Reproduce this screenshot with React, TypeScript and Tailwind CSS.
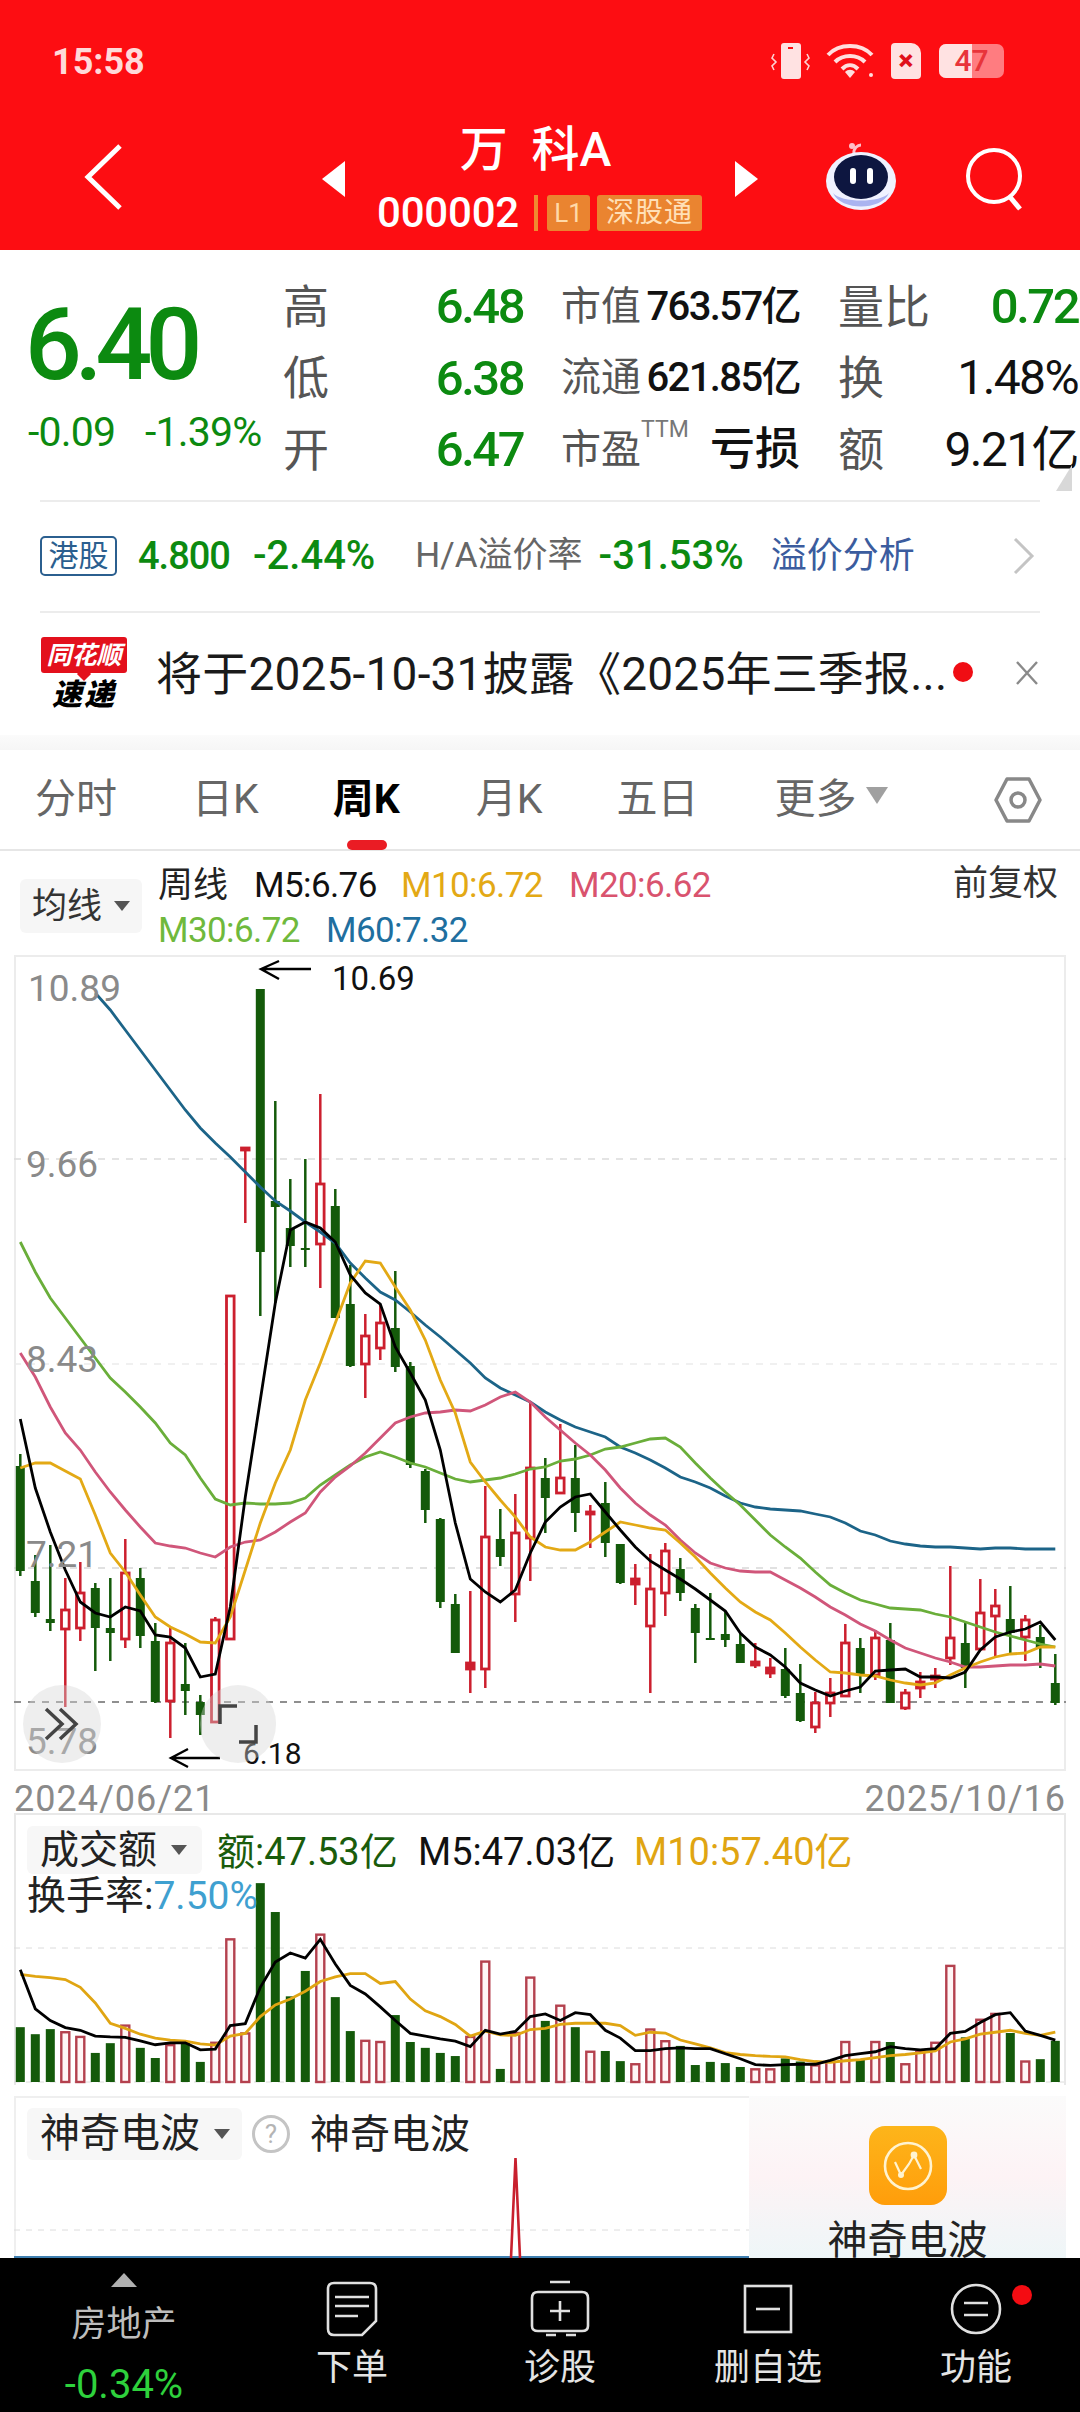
import React from "react";

const G = "#145a0a";
const R = "#cc1f2e";
const X0 = 20.3;
const DX = 15;
const cx = (i: number) => X0 + DX * i;

// [isRed, wickTop, wickBottom, bodyTop, bodyBottom]
const candles: [number, number, number, number, number][] = [
  [0,1454,1576,1466,1571],[0,1555,1617,1581,1613],[0,1545,1631,1619,1623],[1,1578,1707,1610,1629],[1,1562,1641,1593,1628],
  [0,1583,1671,1588,1628],[0,1578,1661,1628,1633],[1,1539,1648,1573,1639],[0,1568,1648,1578,1636],[0,1623,1703,1641,1702],
  [1,1627,1738,1643,1701],[0,1643,1715,1684,1691],[0,1695,1735,1702,1715],[1,1617,1722,1620,1722],[1,1296,1639,1296,1639],
  [1,1147,1223,1148,1150],[0,989,1316,989,1252],[0,1101,1303,1201,1207],[0,1179,1267,1228,1246],[0,1159,1267,1248,1250],
  [1,1094,1288,1184,1244],[0,1189,1318,1206,1318],[0,1265,1367,1304,1366],[1,1314,1398,1336,1364],[1,1305,1360,1323,1348],
  [0,1271,1372,1328,1367],[0,1362,1468,1366,1465],[0,1469,1523,1471,1510],[0,1518,1608,1519,1602],[0,1594,1653,1604,1653],
  [1,1591,1693,1663,1669],[1,1486,1688,1537,1669],[0,1509,1566,1539,1557],[1,1494,1622,1533,1594],[1,1403,1581,1468,1538],
  [0,1458,1533,1478,1498],[1,1424,1493,1478,1493],[0,1445,1532,1478,1513],[1,1505,1548,1512,1513],[0,1482,1557,1503,1543],
  [0,1544,1584,1544,1583],[1,1564,1605,1579,1584],[1,1554,1693,1589,1626],[1,1543,1616,1551,1593],[0,1558,1601,1569,1593],
  [0,1604,1663,1608,1633],[0,1593,1639,1638,1639],[0,1612,1647,1634,1640],[0,1633,1663,1644,1663],[1,1643,1668,1662,1665],
  [1,1658,1678,1668,1673],[0,1648,1698,1669,1696],[0,1664,1722,1693,1721],[1,1692,1733,1703,1727],[1,1678,1717,1693,1703],
  [1,1624,1696,1643,1696],[0,1638,1693,1648,1675],[1,1630,1680,1638,1675],[0,1623,1703,1640,1703],[1,1689,1710,1693,1708],
  [1,1672,1698,1682,1688],[1,1668,1688,1676,1679],[1,1566,1665,1638,1658],[0,1623,1688,1643,1668],[1,1579,1649,1613,1649],
  [1,1589,1656,1606,1616],[0,1586,1653,1619,1633],[1,1615,1661,1620,1637],[0,1625,1668,1637,1648],[0,1654,1705,1683,1703],
];

const m5 = [1419,1488,1532,1570,1602,1613,1617,1607,1611,1635,1637,1648,1677,1674,1607,1497,1400,1303,1230,1222,1228,1242,1275,1293,1304,1347,1373,1400,1450,1523,1579,1592,1602,1590,1553,1522,1507,1497,1494,1512,1530,1547,1561,1570,1579,1589,1600,1611,1633,1647,1655,1667,1683,1690,1696,1691,1687,1671,1670,1669,1677,1677,1678,1672,1650,1637,1632,1629,1622,1640];
const m10 = [1468,1463,1463,1471,1479,1515,1553,1572,1595,1617,1627,1634,1642,1643,1617,1570,1523,1483,1450,1400,1363,1323,1283,1261,1263,1287,1310,1340,1380,1413,1462,1482,1500,1517,1537,1547,1550,1550,1542,1532,1522,1525,1528,1530,1543,1557,1573,1588,1602,1612,1620,1633,1647,1660,1672,1673,1675,1676,1680,1683,1685,1683,1675,1668,1662,1657,1654,1653,1647,1647];
const m20 = [1353,1377,1407,1433,1450,1472,1492,1510,1527,1543,1546,1548,1553,1557,1547,1542,1540,1532,1522,1513,1492,1477,1466,1453,1438,1423,1417,1413,1412,1410,1411,1405,1397,1392,1402,1417,1430,1443,1455,1470,1488,1503,1515,1525,1540,1553,1563,1568,1571,1572,1572,1580,1588,1597,1607,1615,1624,1631,1640,1648,1653,1658,1662,1667,1667,1666,1665,1665,1664,1666];
const m30 = [1242,1272,1298,1318,1338,1358,1378,1392,1407,1423,1443,1455,1478,1499,1505,1503,1504,1504,1503,1498,1485,1475,1465,1457,1452,1457,1463,1467,1473,1479,1482,1480,1478,1474,1469,1467,1461,1459,1455,1449,1447,1443,1439,1438,1447,1463,1478,1492,1505,1520,1535,1547,1558,1572,1585,1593,1600,1604,1608,1609,1610,1614,1617,1622,1627,1632,1636,1640,1644,1647];
const m60 = [993,1010,1030,1050,1070,1090,1110,1128,1143,1157,1172,1187,1201,1211,1222,1232,1243,1263,1278,1292,1300,1312,1325,1337,1350,1363,1378,1388,1395,1402,1412,1420,1427,1432,1437,1447,1453,1460,1468,1477,1482,1488,1496,1503,1507,1509,1510,1511,1514,1517,1523,1531,1535,1541,1544,1546,1547,1547,1548,1549,1548,1548,1549,1549,1549];

const volTop = [582,600,587,595,607,648,623,578,635,661,628,622,671,622,357,598,213,287,503,438,345,505,592,617,620,551,620,635,648,656,607,414,689,597,455,566,527,582,645,643,669,677,588,618,630,679,671,674,684,690,690,662,670,680,670,620,665,620,620,677,645,622,425,608,563,548,597,670,664,617];
const volM5 = [435,535,565,583,590,605,607,608,617,627,622,622,640,638,578,573,480,415,392,405,357,420,475,497,530,565,598,605,612,618,632,590,600,593,555,548,565,545,550,590,610,642,642,637,635,637,637,650,663,678,680,678,677,677,667,655,650,645,632,637,640,637,598,593,570,550,545,592,603,615];
const volM10 = [447,452,455,460,480,520,572,585,600,610,615,618,625,628,605,598,555,525,510,490,465,453,445,445,470,465,510,540,555,575,605,592,602,603,588,585,575,572,572,572,578,603,595,597,615,625,635,647,652,655,657,658,665,670,672,668,665,660,655,652,648,643,620,612,600,595,590,598,603,595];
const vy = (z: number) => 1800 + z / 2.562;

const pts = (a: number[], start = 0) => a.map((y, i) => `${cx(i + start)},${y}`).join(" ");

function PriceChart() {
  return (
    <svg width="1052" height="816" viewBox="14 955 1052 816" className="block">
      <path d="M15 1771 V956 H1065 V1771 M14 1770 H1066" fill="none" stroke="#ececec" strokeWidth="2" />
      <line x1="14" x2="1066" y1="1159" y2="1159" stroke="#dcdcdc" strokeWidth="1.5" strokeDasharray="7 7" />
      <line x1="14" x2="1066" y1="1364" y2="1364" stroke="#ececec" strokeWidth="1.5" strokeDasharray="7 7" />
      <line x1="14" x2="1066" y1="1568" y2="1568" stroke="#d8d8d8" strokeWidth="1.5" strokeDasharray="7 7" />
      <line x1="14" x2="1066" y1="1702" y2="1702" stroke="#8f8f8f" strokeWidth="2" strokeDasharray="7 7" />
      {candles.map(([red, wt, wb, bt, bb], i) => {
        const x = cx(i);
        const c = red ? R : G;
        const h = Math.max(bb - bt, 2);
        return (
          <g key={i}>
            <line x1={x} x2={x} y1={wt} y2={bt} stroke={c} strokeWidth="2.5" />
            <line x1={x} x2={x} y1={bb} y2={wb} stroke={c} strokeWidth="2.5" />
            {red ? (
              <rect x={x - 3.8} y={bt} width="7.6" height={h} fill={h < 8 ? c : "#fff"} stroke={c} strokeWidth="2.8" />
            ) : (
              <rect x={x - 4.5} y={bt} width="9" height={h} fill={c} />
            )}
          </g>
        );
      })}
      <polyline points={pts(m60, 5)} fill="none" stroke="#1c6488" strokeWidth="2.8" />
      <polyline points={pts(m30)} fill="none" stroke="#6aae3a" strokeWidth="2.8" />
      <polyline points={pts(m20)} fill="none" stroke="#d0567a" strokeWidth="2.8" />
      <polyline points={pts(m10)} fill="none" stroke="#e3a915" strokeWidth="2.8" />
      <polyline points={pts(m5)} fill="none" stroke="#000" strokeWidth="2.8" />
      <path d="M279 961 L261 969 L279 979 M261 969 H311" fill="none" stroke="#000" strokeWidth="2.4" />
      <path d="M188 1749 L171 1758 L188 1767 M171 1758 H220" fill="none" stroke="#000" strokeWidth="2.4" />
    </svg>
  );
}

function VolumeChart() {
  return (
    <svg width="1052" height="272" viewBox="14 1813 1052 272" className="block">
      <path d="M15 2085 V1814 H1065 V2085" fill="none" stroke="#e8e8e8" strokeWidth="2" />
      <line x1="14" x2="1066" y1="1948" y2="1948" stroke="#dcdcdc" strokeWidth="1" strokeDasharray="6 6" />
      <line x1="14" x2="1066" y1="2082" y2="2082" stroke="#dcdcdc" strokeWidth="1" strokeDasharray="6 6" />
      {volTop.map((z, i) => {
        const red = candles[i][0];
        const y = vy(z);
        const x = cx(i);
        return red ? (
          <rect key={i} x={x - 4} y={y} width="8" height={2082 - y} fill="#fff6f6" stroke="#b4414e" strokeWidth="2.4" />
        ) : (
          <rect key={i} x={x - 4.5} y={y} width="9" height={2082 - y} fill={G} />
        );
      })}
      <polyline points={pts(volM10.map(vy))} fill="none" stroke="#e0a512" strokeWidth="2.8" />
      <polyline points={pts(volM5.map(vy))} fill="none" stroke="#000" strokeWidth="2.8" />
    </svg>
  );
}

function WaveChart() {
  return (
    <svg width="1052" height="162" viewBox="14 2096 1052 162" className="block">
      <path d="M15 2258 V2097 H1065 V2258" fill="none" stroke="#efefef" strokeWidth="2" />
      <line x1="14" x2="1066" y1="2230" y2="2230" stroke="#dcdcdc" strokeWidth="1" strokeDasharray="6 6" />
      <line x1="14" x2="1066" y1="2257" y2="2257" stroke="#3f7fb0" strokeWidth="2" />
      <path d="M511 2258 L515.5 2158 L520 2258" fill="none" stroke="#c8202e" strokeWidth="2.6" />
    </svg>
  );
}

function Caret({ className }: { className: string }) {
  return (
    <svg width="18" height="12" viewBox="0 0 18 12" className={className}>
      <path d="M1 1 H17 L9 11 Z" fill="#555" />
    </svg>
  );
}

function Robot() {
  return (
    <svg width="72" height="68" viewBox="0 0 72 68" className="ml-[67px]">
      <path d="M29 11 C28 5 33 2 36 2" fill="none" stroke="#ffc0c8" strokeWidth="3" />
      <circle cx="27" cy="3" r="3" fill="#ffc0c8" />
      <ellipse cx="36" cy="38" rx="35" ry="29" fill="#f0f2ff" />
      <path d="M8 50 C16 68 56 68 64 50 C56 60 16 60 8 50Z" fill="#aab4f0" />
      <ellipse cx="36" cy="34" rx="27" ry="22" fill="#0d1640" />
      <rect x="25" y="25" width="6" height="16" rx="3" fill="#fff" />
      <rect x="42" y="25" width="6" height="16" rx="3" fill="#fff" />
    </svg>
  );
}

function Row({ label, value, labelCls, valueCls }: { label: React.ReactNode; value: React.ReactNode; labelCls: string; valueCls: string }) {
  return (
    <div className="flex items-center justify-between h-[71.5px] whitespace-nowrap">
      <span className={labelCls}>{label}</span>
      <span className={valueCls}>{value}</span>
    </div>
  );
}

const up = "text-[46px] leading-none text-[#555555]";
const mid = "text-[40px] leading-none text-[#555555]";
const gv = "text-[49px] leading-none font-medium text-[#0c8a10] tracking-[-2.5px]";
const bv = "text-[48px] leading-none text-[#111111] tracking-[-1.6px]";
const mv = "text-[40px] leading-none font-medium text-[#111111] tracking-[-1.6px]";

function BottomItem({ icon, label, dot }: { icon: React.ReactNode; label: string; dot?: boolean }) {
  return (
    <div className="relative w-[208px] flex flex-col items-center">
      <div className="h-[62px] mt-[20px] flex items-center justify-center">{icon}</div>
      <div className="mt-[5px] text-[36px] leading-[46px] text-[#e4e4e4]">{label}</div>
      {dot && <div className="absolute left-[140px] top-[27px] w-[20px] h-[20px] rounded-full bg-[#f40c12]" />}
    </div>
  );
}

export default function App() {
  return (
    <div className="relative w-[1080px] h-[2412px] overflow-hidden bg-white flex flex-col font-['Roboto','Noto_Sans_CJK_SC',sans-serif]">
      {/* header */}
      <div className="h-[250px] shrink-0 bg-[#fd0d12] flex flex-col">
        <div className="h-[125px] flex items-start justify-between pt-[42px] pl-[52px] pr-[76px]">
          <span className="text-[36px] leading-[40px] font-bold text-[#ffd9d9]">15:58</span>
          <div className="flex items-center gap-[14px]">
            <svg width="40" height="38" viewBox="0 0 40 38">
              <rect x="10" y="1" width="20" height="36" rx="3" fill="#ffe2e2" />
              <rect x="17" y="5" width="5" height="2" fill="#fd0d12" />
              <path d="M3 12 L1 16 L5 20 L1 24 L3 28 M36 12 L38 16 L34 20 L38 24 L36 28" fill="none" stroke="#ffd0d0" strokeWidth="1.6" />
            </svg>
            <svg width="52" height="38" viewBox="0 0 52 38">
              <path d="M3 13 C14 1 36 1 47 13 M10 20 C18 12 32 12 40 20 M17 27 C22 22 28 22 33 27" fill="none" stroke="#ffdede" strokeWidth="4" />
              <path d="M20 30 L25 36 L30 30 C27 27 23 27 20 30Z" fill="#ffdede" />
              <circle cx="46" cy="33" r="2" fill="#ffdede" />
            </svg>
            <div className="w-[30px] h-[36px] rounded-[4px] rounded-tr-[10px] bg-[#ffe2e2] flex items-center justify-center text-[28px] leading-none font-black text-[#e0101a]">×</div>
            <div className="relative w-[65px] h-[34px] rounded-[7px] overflow-hidden bg-[#ff7c80] flex items-center justify-center ml-[4px]">
              <div className="absolute left-0 top-0 bottom-0 w-[33px] bg-[#ffe2e2]" />
              <span className="relative text-[30px] leading-none font-medium text-[#e8343a]">47</span>
            </div>
          </div>
        </div>
        <div className="flex items-start h-[125px]">
          <svg width="40" height="66" viewBox="0 0 40 66" className="ml-[84px] mt-[19px]">
            <path d="M36 2 L4 33 L36 64" fill="none" stroke="#fff" strokeWidth="5" />
          </svg>
          <svg width="23" height="36" viewBox="0 0 23 36" className="ml-[198px] mt-[36px]">
            <path d="M23 0 V36 L0 18Z" fill="#fff" />
          </svg>
          <div className="ml-[32px] w-[322px] flex flex-col items-start">
            <div className="self-center ml-[-5px] text-[48px] leading-[50px] font-medium text-white whitespace-nowrap">万&nbsp;&nbsp;科A</div>
            <div className="flex items-center mt-[19px] h-[38px]">
              <span className="text-[42px] leading-none font-medium text-white tracking-[-0.2px]">000002</span>
              <span className="w-[4px] h-[36px] bg-[#f08a30] ml-[15px]" />
              <span className="ml-[9px] w-[43px] h-[36px] bg-[#ea8430] rounded-[3px] flex items-center justify-center text-[26px] leading-none text-[#ffd9a8]">L1</span>
              <span className="ml-[7px] w-[105px] h-[36px] bg-[#ea8430] rounded-[3px] flex items-center justify-center text-[28px] leading-none text-[#ffe0b8] tracking-[1px] whitespace-nowrap">深股通</span>
            </div>
          </div>
          <svg width="23" height="36" viewBox="0 0 23 36" className="ml-[36px] mt-[36px]">
            <path d="M0 0 V36 L23 18Z" fill="#fff" />
          </svg>
          <div className="mt-[18px]"><Robot /></div>
          <svg width="62" height="66" viewBox="0 0 62 66" className="ml-[67px] mt-[22px]">
            <circle cx="30" cy="29" r="26" fill="none" stroke="#fff" strokeWidth="4" />
            <path d="M46 50 L56 62" fill="none" stroke="#fff" strokeWidth="5" />
          </svg>
        </div>
      </div>

      {/* quote */}
      <div className="relative h-[250px] shrink-0 flex pt-[21px]">
        <div className="w-[283px] pl-[25px] shrink-0">
          <div className="mt-[19px] text-[100px] leading-[110px] font-medium text-[#0c8a10] tracking-[-7px]">6.40</div>
          <div className="mt-[9px] flex text-[41px] leading-[46px] text-[#0c8a10] tracking-[-0.8px] whitespace-nowrap pl-[3px]">
            <span className="w-[117px]">-0.09</span>
            <span>-1.39%</span>
          </div>
        </div>
        <div className="w-[240px] shrink-0">
          <Row label="高" value="6.48" labelCls={up} valueCls={gv} />
          <Row label="低" value="6.38" labelCls={up} valueCls={gv} />
          <Row label="开" value="6.47" labelCls={up} valueCls={gv} />
        </div>
        <div className="ml-[38px] w-[239px] shrink-0">
          <Row label="市值" value="763.57亿" labelCls={mid} valueCls={mv} />
          <Row label="流通" value="621.85亿" labelCls={mid} valueCls={mv} />
          <Row label={<>市盈<sup className="text-[23px] text-[#777777] align-super">TTM</sup></>} value="亏损" labelCls={mid} valueCls="text-[45px] leading-none font-medium text-[#111111]" />
        </div>
        <div className="ml-[38px] w-[240px] shrink-0">
          <Row label="量比" value="0.72" labelCls={up} valueCls={gv} />
          <Row label="换" value="1.48%" labelCls={up} valueCls={bv} />
          <Row label="额" value="9.21亿" labelCls={up} valueCls={bv} />
        </div>
        <svg width="16" height="26" viewBox="0 0 16 26" className="absolute left-[1056px] top-[215px]">
          <path d="M16 0 V26 H0Z" fill="#d8d8d8" />
        </svg>
      </div>

      {/* HK row */}
      <div className="mx-[40px] h-[113px] shrink-0 border-t-2 border-b-2 border-[#ececec] flex items-center pb-[2px] whitespace-nowrap">
        <span className="w-[77px] h-[40px] rounded-[5px] border-2 border-[#2b5f8f] flex items-center justify-center text-[30px] leading-none text-[#2b5f8f]">港股</span>
        <span className="ml-[21px] text-[38px] leading-none font-medium text-[#0c8a10] tracking-[-1px]">4.800</span>
        <span className="ml-[23px] text-[40px] leading-none font-medium text-[#0c8a10]">-2.44%</span>
        <span className="ml-[40px] text-[35px] leading-none text-[#666666]">H/A溢价率</span>
        <span className="ml-[16px] text-[40px] leading-none font-medium text-[#0c8a10]">-31.53%</span>
        <span className="ml-[27px] text-[36px] leading-none text-[#3b5c9e]">溢价分析</span>
        <svg width="22" height="36" viewBox="0 0 22 36" className="ml-[98px]">
          <path d="M2 1 L19 18 L2 35" fill="none" stroke="#c4c4c4" strokeWidth="3" />
        </svg>
      </div>

      {/* news */}
      <div className="h-[122px] shrink-0 pl-[40px] flex items-center whitespace-nowrap">
        <div className="w-[88px] h-[74px] flex flex-col items-center shrink-0">
          <div className="relative w-[86px] h-[37px] bg-[#e3101c] rounded-[3px] flex items-center justify-center text-[25px] leading-none font-bold italic text-white">
            同花顺
            <span className="absolute left-[38px] -bottom-[6px] w-[10px] h-[10px] rotate-45 bg-[#e3101c]" />
          </div>
          <div className="mt-[6px] text-[30px] leading-[32px] font-black italic text-black tracking-[2px]">速递</div>
        </div>
        <span className="ml-[28px] text-[46px] leading-none text-[#1a1a1a] tracking-[0.2px]">将于2025-10-31披露《2025年三季报...</span>
        <span className="absolute left-[953px] top-[662px] w-[20px] h-[20px] rounded-full bg-[#f00d14]" />
        <svg width="24" height="26" viewBox="0 0 24 26" className="absolute left-[1015px] top-[660px]">
          <path d="M2 2 L22 24 M22 2 L2 24" fill="none" stroke="#8a8a8a" strokeWidth="2.4" />
        </svg>
      </div>
      <div className="h-[15px] shrink-0 bg-linear-to-b from-[#fbfbfb] to-[#f6f6f6]" />

      {/* tabs */}
      <div className="relative h-[101px] shrink-0 border-b-2 border-[#e6e6e6] flex items-center text-[41px] leading-none text-[#666666] whitespace-nowrap">
        <span className="ml-[35px]">分时</span>
        <span className="ml-[75px]">日K</span>
        <span className="ml-[74px] font-bold text-black">周K</span>
        <span className="ml-[76px]">月K</span>
        <span className="ml-[74px]">五日</span>
        <span className="ml-[76px]">更多</span>
        <svg width="22" height="17" viewBox="0 0 22 17" className="ml-[9px] -mt-[8px]">
          <path d="M0 0 H22 L11 17Z" fill="#a0a0a0" />
        </svg>
        <svg width="48" height="46" viewBox="0 0 48 46" className="ml-[106px]">
          <path d="M13 2 H35 L46 23 L35 44 H13 L2 23 Z" fill="none" stroke="#888888" strokeWidth="3.5" strokeLinejoin="round" />
          <circle cx="24" cy="23" r="7" fill="none" stroke="#888888" strokeWidth="3.5" />
        </svg>
        <span className="absolute left-[347px] top-[90px] w-[40px] h-[10px] rounded-full bg-[#ea1c24]" />
      </div>

      {/* legend */}
      <div className="relative h-[104px] shrink-0 flex whitespace-nowrap">
        <div className="ml-[20px] mt-[28px] w-[122px] h-[54px] rounded-[6px] bg-[#f6f6f6] flex items-center pl-[12px] text-[35px] leading-none text-[#333333]">
          均线
          <Caret className="ml-[11px]" />
        </div>
        <div className="ml-[16px] flex flex-col text-[35px] leading-none">
          <div className="flex items-center h-[44px] mt-[12px]">
            <span className="text-[#222222] w-[96px]">周线</span>
            <span className="text-[#111111] tracking-[-0.6px] w-[147px]">M5:6.76</span>
            <span className="text-[#e3a915] tracking-[-0.6px] w-[168px]">M10:6.72</span>
            <span className="text-[#d9536e] tracking-[-0.6px]">M20:6.62</span>
          </div>
          <div className="flex items-center h-[44px] mt-[1px]">
            <span className="text-[#6fb93c] tracking-[-0.6px] w-[168px]">M30:6.72</span>
            <span className="text-[#1f6f9f] tracking-[-0.6px]">M60:7.32</span>
          </div>
        </div>
        <span className="absolute left-[953px] top-[15px] text-[35px] leading-none text-[#333333]">前复权</span>
      </div>

      {/* price chart */}
      <div className="relative ml-[14px] w-[1052px] h-[816px] shrink-0">
        <PriceChart />
        <span className="absolute left-[14px] top-[15px] text-[37px] leading-none text-[#8a8a8a]">10.89</span>
        <span className="absolute left-[12px] top-[191px] text-[37px] leading-none text-[#8a8a8a]">9.66</span>
        <span className="absolute left-[12px] top-[386px] text-[37px] leading-none text-[#8a8a8a]">8.43</span>
        <span className="absolute left-[12px] top-[581px] text-[37px] leading-none text-[#8a8a8a]">7.21</span>
        <span className="absolute left-[12px] top-[768px] text-[37px] leading-none text-[#8a8a8a]">5.78</span>
        <span className="absolute left-[318px] top-[7px] text-[33px] leading-none text-[#111111]">10.69</span>
        <span className="absolute left-[229px] top-[784px] text-[30px] leading-none text-[#111111]">6.18</span>
        <div className="absolute left-[9px] top-[730px] w-[78px] h-[78px] rounded-full bg-[#d4d4d4]/40 flex items-center justify-center">
          <svg width="40" height="40" viewBox="0 0 40 40">
            <path d="M4 5 L20 20 L4 35 M18 5 L34 20 L18 35" fill="none" stroke="#444444" strokeWidth="3.5" />
          </svg>
        </div>
        <div className="absolute left-[186px] top-[730px] w-[76px] h-[78px] rounded-full bg-[#d4d4d4]/40 flex items-center justify-center">
          <svg width="40" height="40" viewBox="0 0 40 40">
            <path d="M2 20 V2 H19 M21 38 H38 V21" fill="none" stroke="#444444" strokeWidth="3.5" />
          </svg>
        </div>
      </div>

      {/* dates */}
      <div className="h-[42px] shrink-0 ml-[14px] w-[1052px] flex items-center justify-between pt-[14px] text-[36px] leading-none text-[#8a8a8a] tracking-[1px]">
        <span>2024/06/21</span>
        <span>2025/10/16</span>
      </div>

      {/* volume */}
      <div className="relative ml-[14px] w-[1052px] h-[272px] shrink-0">
        <VolumeChart />
        <div className="absolute left-[13px] top-[13px] w-[175px] h-[48px] rounded-[6px] bg-[#f7f7f7] flex items-center pl-[13px] text-[39px] leading-none text-[#222222] whitespace-nowrap">
          成交额
          <Caret className="ml-[13px]" />
        </div>
        <div className="absolute left-[203px] top-[18px] flex items-center text-[38px] leading-[42px] whitespace-nowrap">
          <span className="w-[201px] text-[#1a5c0c]">额:47.53亿</span>
          <span className="w-[216px] text-[#111111]">M5:47.03亿</span>
          <span className="text-[#e0a512]">M10:57.40亿</span>
        </div>
        <div className="absolute left-[13px] top-[62px] text-[39px] leading-[42px] text-[#222222] whitespace-nowrap">
          换手率:<span className="text-[#3fa0d0]">7.50%</span>
        </div>
      </div>

      {/* wave */}
      <div className="relative ml-[14px] mt-[11px] w-[1052px] h-[162px] shrink-0 overflow-hidden">
        <WaveChart />
        <div className="absolute left-[13px] top-[12px] w-[215px] h-[52px] rounded-[6px] bg-[#f7f7f7] flex items-center pl-[13px] text-[40px] leading-none text-[#222222] whitespace-nowrap">
          神奇电波
          <Caret className="ml-[13px]" />
        </div>
        <div className="absolute left-[238px] top-[19px] w-[38px] h-[38px] rounded-full border-[3px] border-[#c4c4c4] flex items-center justify-center text-[26px] leading-none text-[#b4b4b4]">?</div>
        <span className="absolute left-[296px] top-[19px] text-[40px] leading-none text-[#222222] whitespace-nowrap">神奇电波</span>
        <div className="absolute left-[735px] top-0 right-0 bottom-0 bg-linear-to-b from-[#fbfbfb] via-[#fdf3f5] to-[#eef6f8] flex flex-col items-center">
          <div className="mt-[30px] w-[78px] h-[79px] shrink-0 rounded-[16px] bg-linear-to-b from-[#fdb51a] to-[#ff9d0a] flex items-center justify-center">
            <svg width="52" height="52" viewBox="0 0 52 52">
              <circle cx="26" cy="26" r="23" fill="none" stroke="#fff3d0" strokeWidth="2.6" />
              <path d="M13 22 L19 35 L27 24 L32 15 L39 29" fill="none" stroke="#fff3d0" strokeWidth="2.2" />
              <circle cx="19" cy="35" r="3" fill="#fff3d0" />
              <circle cx="32" cy="15" r="3.4" fill="#fff3d0" />
            </svg>
          </div>
          <span className="mt-[11px] shrink-0 text-[40px] leading-[50px] text-[#222222] whitespace-nowrap">神奇电波</span>
        </div>
      </div>

      {/* bottom bar */}
      <div className="absolute left-0 right-0 top-[2258px] h-[154px] bg-black flex">
        <div className="w-[248px] flex flex-col items-center">
          <svg width="26" height="14" viewBox="0 0 26 14" className="mt-[15px]">
            <path d="M13 0 L26 14 H0Z" fill="#b0b0b0" />
          </svg>
          <span className="mt-[16px] text-[35px] leading-[44px] text-[#bdbdbd]">房地产</span>
          <span className="mt-[16px] text-[40px] leading-[44px] text-[#2ed13c]">-0.34%</span>
        </div>
        <BottomItem
          label="下单"
          icon={
            <svg width="52" height="56" viewBox="0 0 52 56">
              <path d="M8 2 H44 Q50 2 50 8 V40 L36 54 H8 Q2 54 2 48 V8 Q2 2 8 2Z" fill="none" stroke="#e0e0e0" strokeWidth="2.6" />
              <path d="M9 16 H43 M9 25 H43 M9 35 H32" stroke="#e0e0e0" strokeWidth="2.4" />
            </svg>
          }
        />
        <BottomItem
          label="诊股"
          icon={
            <svg width="60" height="58" viewBox="0 0 60 58">
              <path d="M20 2 H40 M8 12 H52 Q58 12 58 18 V46 Q58 51 52 51 H8 Q2 51 2 46 V18 Q2 12 8 12Z M16 55 H26 M36 55 H46" fill="none" stroke="#e0e0e0" strokeWidth="2.6" />
              <path d="M30 21 V41 M20 31 H40" stroke="#e0e0e0" strokeWidth="2.6" />
            </svg>
          }
        />
        <BottomItem
          label="删自选"
          icon={
            <svg width="50" height="50" viewBox="0 0 50 50">
              <rect x="2" y="2" width="46" height="46" fill="none" stroke="#e0e0e0" strokeWidth="2.6" />
              <path d="M13 25 H37" stroke="#e0e0e0" strokeWidth="2.6" />
            </svg>
          }
        />
        <BottomItem
          dot
          label="功能"
          icon={
            <svg width="52" height="52" viewBox="0 0 52 52">
              <circle cx="26" cy="26" r="24" fill="none" stroke="#e0e0e0" strokeWidth="2.6" />
              <path d="M14 20 H38 M14 32 H38" stroke="#e0e0e0" strokeWidth="2.6" />
            </svg>
          }
        />
      </div>
    </div>
  );
}
